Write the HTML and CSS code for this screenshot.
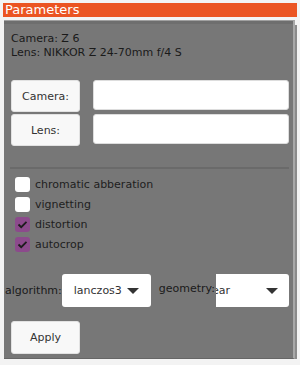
FILE: index.html
```html
<!DOCTYPE html>
<html lang="en">
<head>
  <meta charset="UTF-8">
  <meta name="viewport" content="width=device-width, initial-scale=1.0">
  <title>Parameters</title>
  <link rel="stylesheet" href="styles.css">
</head>
<body>
  <div class="title">Parameters</div>
  <div class="panel">
    <div class="info">
      <div>Camera: Z 6</div>
      <div>Lens: NIKKOR Z 24-70mm f/4 S</div>
    </div>

    <div class="lookup">
      <button class="btn">Camera:</button>
      <input type="text" class="field">
      <button class="btn">Lens:</button>
      <input type="text" class="field">
    </div>

    <div class="rule"></div>

    <div class="checks">
      <label class="check"><span class="box"></span>chromatic abberation</label>
      <label class="check"><span class="box"></span>vignetting</label>
      <label class="check"><span class="box on"><svg width="11" height="9" viewBox="0 0 11 9"><path d="M1.5 4.5 L4.2 7.2 L9.5 1.8" fill="none" stroke="#1c1c1c" stroke-width="1.8"/></svg></span>distortion</label>
      <label class="check"><span class="box on"><svg width="11" height="9" viewBox="0 0 11 9"><path d="M1.5 4.5 L4.2 7.2 L9.5 1.8" fill="none" stroke="#1c1c1c" stroke-width="1.8"/></svg></span>autocrop</label>
    </div>

    <div class="options">
      <span class="opt-label">algorithm:</span>
      <div class="select algo"><span class="value">lanczos3</span><span class="arrow"></span></div>
      <span class="opt-label geo-label">geometry:</span>
      <div class="select geo"><span class="value clipped">linear</span><span class="arrow"></span></div>
    </div>

    <button class="btn apply">Apply</button>
  </div>
</body>
</html>
```

FILE: styles.css
```css
body {
    margin: 0;
    background-color: #f3f3f3;
    font-family: "DejaVu Sans", Verdana, sans-serif;
    font-size: 11px;
    color: #1a1a1a;
}
.title {
    margin: 3px 3px 0 3px;
    height: 14px;
    line-height: 14px;
    padding-left: 2px;
    background-color: #eb5422;
    color: #fff;
    font-size: 13px;
}
.panel {
    margin: 3px 5px 0 4px;
    height: 339px;
    background-color: #777;
    border-top: 1px solid #a0a0a0;
    border-right: 2px solid #a8a8a8;
    border-bottom: 1px solid #666;
    box-shadow: inset 0 3px 0 #6e6e6e, 3px 4px 0 -1px #8a8a8a;
    padding: 0 4px 0 0;
    box-sizing: border-box;
}
.info {
    padding: 11px 0 0 7px;
    line-height: 14px;
}
.lookup {
    display: grid;
    grid-template-columns: 69px 1fr;
    column-gap: 13px;
    row-gap: 2px;
    margin: 20px 0 0 7px;
    align-items: start;
}
.btn {
    font-family: "DejaVu Sans", Verdana, sans-serif;
    font-size: 11px;
    color: #333;
    background-color: #f8f8f8;
    border: 1px solid #e2e2e2;
    border-radius: 3px;
    height: 32px;
    padding: 0;
}
.field {
    height: 30px;
    border: 1px solid #ddd;
    border-radius: 3px;
    background-color: #fff;
    box-sizing: border-box;
}
.rule {
    height: 2px;
    background-color: #6a6a6a;
    margin: 21px 0 0 6px;
}
.checks {
    display: flex;
    flex-direction: column;
    gap: 5px;
    margin: 8px 0 0 11px;
}
.check {
    display: flex;
    align-items: center;
    gap: 5px;
    height: 15px;
    color: #1e1e1e;
}
.box {
    width: 15px;
    height: 15px;
    border-radius: 3px;
    background-color: #fff;
    display: flex;
    align-items: center;
    justify-content: center;
}
.box.on {
    background-color: #8c4a8c;
}
.options {
    display: flex;
    align-items: center;
    margin: 22px 0 0 1px;
}
.opt-label {
    color: #1a1a1a;
}
.geo-label {
    margin: -4px 0 0 8px;
    width: 57px;
    white-space: nowrap;
    position: relative;
    z-index: 1;
}
.select {
    height: 33px;
    background-color: #fff;
    border-radius: 3px;
    box-sizing: border-box;
    display: flex;
    align-items: center;
    overflow: hidden;
    color: #333;
}
.algo {
    width: 89px;
    margin-left: 0;
    padding: 0 12px;
}
.geo {
    width: 73px;
    padding: 0 11px 0 0;
    border-radius: 0 3px 3px 0;
}
.value {
    flex: 1;
    white-space: nowrap;
}
.clipped {
    margin-left: -17px;
}
.arrow {
    width: 0;
    height: 0;
    border-left: 6px solid transparent;
    border-right: 6px solid transparent;
    border-top: 6px solid #333;
}
.apply {
    display: block;
    width: 69px;
    height: 33px;
    margin: 14px 0 0 7px;
}
```
